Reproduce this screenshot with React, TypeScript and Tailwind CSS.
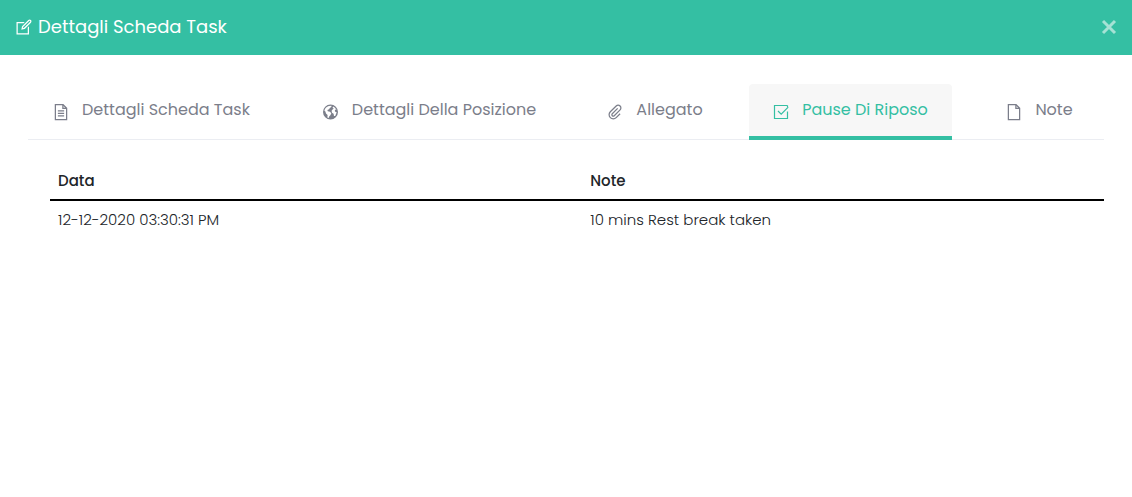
import React from "react";
import { LiaEdit, LiaFileAlt, LiaPaperclipSolid, LiaFile } from "react-icons/lia";

function EarthIcon() {
  return (
    <svg width="20" height="20" viewBox="0 0 20 20" aria-hidden="true">
      <path
        fill="currentColor"
        fillRule="evenodd"
        d="M9.500 2.500a7.500 7.500 0 1 0 0 15 7.500 7.500 0 0 0 0-15ZM7.800 3.900 10.500 3.700 10.300 5 8.800 5.900 8.100 7.200 6.400 8.100 6.800 9.200 9 9.700 10.300 11.200 9.400 13.200 8.300 14.300 7.700 16 6.400 15.600 6.600 13 5 11.400 4.400 9.500 3.400 8.700A6.300 6.300 0 0 1 7.800 3.900ZM12.100 4.400 14 5.700 15.500 8 14.200 7.600 13.800 9 14.600 10.100 15.700 10.300 14.200 14 13 14.100 12.600 11.700 11 10.700 10.600 8.800 11.800 7.300 12.900 6.800 11.600 5.900Z"
      />
    </svg>
  );
}

function CheckBoxIcon() {
  return (
    <svg width="20" height="20" viewBox="0 0 20 20" fill="none" stroke="currentColor" strokeWidth="1.2" aria-hidden="true">
      <path d="M16.500 3.500H3.500V16.500H16.500V9.500M16.500 3.500V5" />
      <path d="M7 9 10.200 12.200 17.200 5.200" />
    </svg>
  );
}

const tabs = [
  { label: "Dettagli Scheda Task", icon: <LiaFileAlt size={20} /> },
  { label: "Dettagli Della Posizione", icon: <EarthIcon /> },
  { label: "Allegato", icon: <LiaPaperclipSolid size={20} /> },
  { label: "Pause Di Riposo", icon: <CheckBoxIcon />, active: true },
  { label: "Note", icon: <LiaFile size={20} /> },
];

export default function App() {
  return (
    <div className="min-h-screen bg-white font-['Poppins','Inter',sans-serif] text-[#212529]">
      <header className="flex h-[55px] items-center justify-between bg-[#34bfa3] px-[14px] text-white">
        <h1 className="flex items-center gap-1 pb-px text-lg">
          <LiaEdit size={20} />
          Dettagli Scheda Task
        </h1>
        <button type="button" aria-label="Chiudi" className="pb-px text-[#a5e2d5]">
          <svg width="18" height="18" viewBox="0 0 18 18" stroke="currentColor" strokeWidth="3" aria-hidden="true">
            <path d="M3 3 15 15M15 3 3 15" />
          </svg>
        </button>
      </header>
      <main className="px-7 pt-[29px]">
        <nav
          role="tablist"
          className="grid grid-cols-[247fr_263fr_142fr_203fr_129fr] gap-x-[23px] border-b border-[#ebedf2]"
        >
          {tabs.map((tab) => (
            <button
              key={tab.label}
              type="button"
              role="tab"
              aria-selected={!!tab.active}
              className={
                "-mb-px flex h-14 items-center justify-center gap-[11px] rounded-t border-b-4 pr-0.5 text-base whitespace-nowrap " +
                (tab.active ? "border-[#34bfa3] bg-[#f7f7f7] text-[#34bfa3]" : "border-transparent text-[#7b7e8a]")
              }
            >
              <span className="pt-1">{tab.icon}</span>
              {tab.label}
            </button>
          ))}
        </nav>
        <div className="pt-6 pl-[22px]">
          <table className="w-full table-fixed border-collapse text-left text-[15px]">
            <colgroup>
              <col className="w-[50.5%]" />
              <col />
            </colgroup>
            <thead>
              <tr className="border-b-2 border-black">
                <th className="h-9 px-2 font-medium">Data</th>
                <th className="h-9 px-2 font-medium">Note</th>
              </tr>
            </thead>
            <tbody>
              <tr>
                <td className="h-10 px-2 font-light">12-12-2020 03:30:31 PM</td>
                <td className="h-10 px-2 font-light">10 mins Rest break taken</td>
              </tr>
            </tbody>
          </table>
        </div>
      </main>
    </div>
  );
}
